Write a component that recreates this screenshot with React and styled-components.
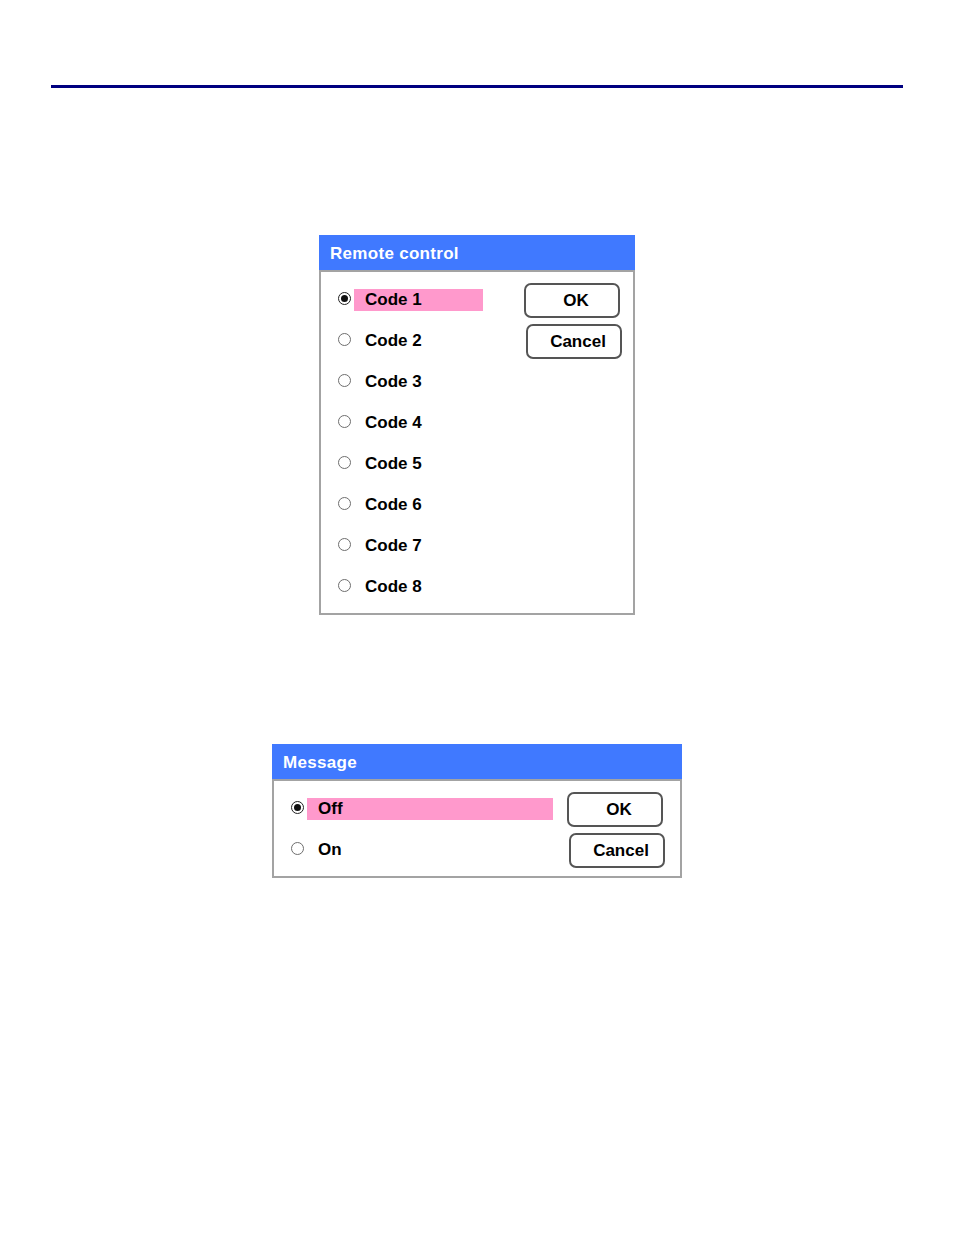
import React from 'react';
import styled, { createGlobalStyle } from 'styled-components';

const GlobalStyle = createGlobalStyle`
  body {
    margin: 0;
    background: #ffffff;
    font-family: "Liberation Sans", Arial, sans-serif;
  }
`

function Radio(props) {
  return (
    <RadioCircle checked={props.checked}>
      {props.checked ? <RadioDot /> : null}
    </RadioCircle>
  )
}

function Dialog(props) {
  return (
    <Window offset={props.offset} top={props.top} width={props.width}>
      <TitleBar>{props.title}</TitleBar>
      <Body pad={props.pad}>
        <Options>
          {props.options.map((label, i) => (
            <Row key={label}>
              <Radio checked={i == 0} />
              <Label selected={i == 0} width={props.labelWidth}>{label}</Label>
            </Row>
          ))}
        </Options>
        <Buttons>
          <Button>OK</Button>
          <Button shift={2}>Cancel</Button>
        </Buttons>
      </Body>
    </Window>
  )
}

export default function App() {
  var codes = ['Code 1', 'Code 2', 'Code 3', 'Code 4', 'Code 5', 'Code 6', 'Code 7', 'Code 8'];
  return (
    <Page>
      <GlobalStyle />
      <Rule />
      <Dialog title="Remote control" options={codes} offset={319} top={147} width={316} labelWidth={129} pad={11} />
      <Dialog title="Message" options={['Off', 'On']} offset={272} top={129} width={410} labelWidth={246} pad={15} />
    </Page>
  )
}

const Page = styled.div `
  width: 954px;
  min-height: 1235px;
  padding-top: 85px;
  box-sizing: border-box;
  display: flex;
  flex-direction: column;
`

const Rule = styled.div `
  margin-left: 51px;
  width: 852px;
  height: 3px;
  background: #000080;
`

const Window = styled.div `
  margin-left: ${props => props.offset}px;
  margin-top: ${props => props.top}px;
  width: ${props => props.width}px;
  display: flex;
  flex-direction: column;
`

const TitleBar = styled.div `
  height: 35px;
  background: #4079ff;
  color: #ffffff;
  font-weight: bold;
  font-size: 17px;
  line-height: 37px;
  padding-left: 11px;
  letter-spacing: 0.3px;
`

const Body = styled.div `
  border: 2px solid #a3a3a3;
  display: flex;
  justify-content: space-between;
  padding: 7px ${props => props.pad}px 6px 16px;
`

const Options = styled.div `
  display: flex;
  flex-direction: column;
`

const Row = styled.div `
  height: 41px;
  display: flex;
  align-items: center;
`

const RadioCircle = styled.div `
  width: 11px;
  height: 11px;
  border-radius: 50%;
  border: 1.5px solid ${props => props.checked ? '#222222' : '#6e6e6e'};
  display: flex;
  align-items: center;
  justify-content: center;
  margin-left: 1px;
  margin-right: 3px;
  margin-top: -3px;
`

const RadioDot = styled.div `
  width: 7px;
  height: 7px;
  border-radius: 50%;
  background: #111111;
`

const Label = styled.div `
  width: ${props => props.width}px;
  height: 22px;
  box-sizing: border-box;
  padding-left: 11px;
  background: ${props => props.selected ? '#ff99cc' : 'transparent'};
  font-size: 17px;
  font-weight: bold;
  line-height: 22px;
  color: #000000;
`

const Buttons = styled.div `
  display: flex;
  flex-direction: column;
  gap: 6px;
  padding-top: 4px;
`

const Button = styled.div `
  width: 92px;
  height: 31px;
  box-sizing: content-box;
  margin-left: ${props => props.shift || 0}px;
  border: 2px solid #555555;
  border-radius: 7px;
  display: flex;
  align-items: center;
  justify-content: center;
  padding-left: 0;
  font-size: 17px;
  font-weight: bold;
  color: #000000;

  &::before {
    content: "";
    width: 8px;
  }
`
